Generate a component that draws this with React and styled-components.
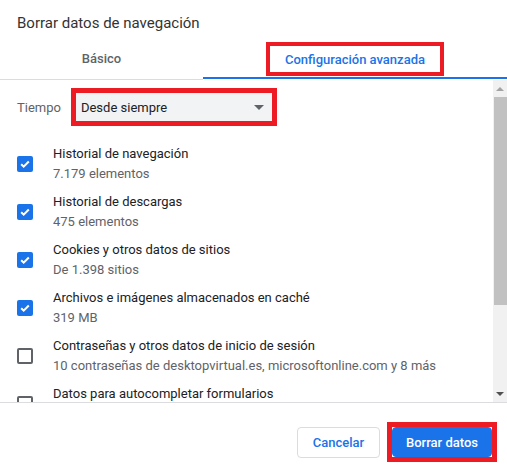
import styled, { createGlobalStyle } from "styled-components";

const GlobalStyle = createGlobalStyle`
  html, body {
    margin: 0;
    padding: 0;
    background: #fff;
  }
  body {
    font-family: Roboto, "Liberation Sans", Arial, sans-serif;
    -webkit-font-smoothing: antialiased;
  }
`;

const RED = "#ed1c24";
const BLUE = "#1a73e8";

const Dialog = styled.div`
  width: 507px;
  height: 471px;
  display: flex;
  flex-direction: column;
  background: #fff;
  overflow: hidden;
`;

const Title = styled.h1`
  margin: 0 0 8px;
  padding: 14px 17px 0;
  font-size: 15px;
  line-height: 18px;
  font-weight: 400;
  color: #333;
`;

const Tabs = styled.div`
  display: flex;
  height: 40px;
`;

const Tab = styled.div`
  box-sizing: border-box;
  display: flex;
  flex-direction: column;
  align-items: center;
  justify-content: ${(p) => (p.$active ? "flex-start" : "center")};
  width: ${(p) => (p.$active ? "auto" : "203px")};
  flex: ${(p) => (p.$active ? 1 : "none")};
  padding: ${(p) => (p.$active ? "2px 0 0" : "0 0 3px")};
  border-bottom: 1px solid ${(p) => (p.$active ? "#fff" : "#dadce0")};
  font-size: 13px;
  font-weight: 500;
  color: ${(p) => (p.$active ? BLUE : "#5f6368")};
`;

const Indicator = styled.div`
  align-self: stretch;
  height: 2px;
  margin-top: 1px;
  background: ${BLUE};
`;

const Highlight = styled.div`
  box-sizing: border-box;
  display: flex;
  align-items: center;
  justify-content: center;
  border: ${(p) => p.$w || 4}px solid ${RED};
  height: ${(p) => (p.$h ? `${p.$h}px` : "auto")};
  padding: ${(p) => p.$pad || "0"};
`;

const Body = styled.div`
  display: flex;
  height: 322px;
  border-bottom: 1px solid #dadce0;
`;

const Content = styled.div`
  flex: 1;
  overflow: hidden;
  padding: 8px 0 0 17px;
`;

const TimeRow = styled.div`
  display: flex;
  align-items: center;
  gap: 10px;
`;

const Label = styled.span`
  font-size: 13px;
  color: #5f6368;
`;

const Select = styled.div`
  box-sizing: border-box;
  width: 196px;
  height: 28px;
  display: flex;
  align-items: center;
  justify-content: space-between;
  padding: 0 8px 0 5px;
  background: #f1f3f4;
  font-size: 13px;
  color: #202124;
`;

const Caret = styled.span`
  width: 0;
  height: 0;
  border-left: 5px solid transparent;
  border-right: 5px solid transparent;
  border-top: 5px solid #5f6368;
`;

const List = styled.div`
  display: flex;
  flex-direction: column;
  gap: 8px;
  margin-top: 18px;
`;

const Row = styled.div`
  display: flex;
  align-items: flex-start;
  gap: 20px;
  height: 40px;
  flex: none;
`;

const Box = styled.span`
  box-sizing: border-box;
  flex: none;
  width: 16px;
  height: 16px;
  margin-top: 12px;
  border-radius: 2px;
  display: flex;
  align-items: center;
  justify-content: center;
  background: ${(p) => (p.$checked ? BLUE : "#fff")};
  border: ${(p) => (p.$checked ? "none" : "2px solid #5f6368")};
`;

const Texts = styled.div`
  display: flex;
  flex-direction: column;
  font-size: 13px;
  line-height: 20px;
`;

const ItemTitle = styled.span`
  color: #202124;
  white-space: nowrap;
`;

const ItemSub = styled.span`
  color: #5f6368;
  white-space: nowrap;
`;

const Scrollbar = styled.div`
  width: 14px;
  flex: none;
  display: flex;
  flex-direction: column;
  background: #f1f1f1;
`;

const Arrow = styled.div`
  height: 17px;
  display: flex;
  align-items: center;
  justify-content: center;
  margin-top: ${(p) => (p.$down ? "auto" : "0")};

  &::before {
    content: "";
    width: 0;
    height: 0;
    border-left: 4px solid transparent;
    border-right: 4px solid transparent;
    ${(p) =>
      p.$down ? "border-top: 4px solid #505050;" : "border-bottom: 4px solid #a3a3a3;"}
  }
`;

const Thumb = styled.div`
  height: 208px;
  margin-left: 1px;
  background: #c1c1c1;
`;

const Footer = styled.div`
  flex: 1;
  display: flex;
  justify-content: flex-end;
  align-items: flex-start;
  gap: 7px;
  padding: 19px 10px 0 0;
`;

const CancelWrap = styled.div`
  height: 40px;
  display: flex;
  align-items: center;
`;

const Button = styled.button`
  box-sizing: border-box;
  height: ${(p) => (p.$primary ? "30px" : "31px")};
  width: ${(p) => (p.$primary ? "100px" : "83px")};
  padding: 0;
  white-space: nowrap;
  border-radius: 4px;
  border: 1px solid ${(p) => (p.$primary ? BLUE : "#dadce0")};
  background: ${(p) => (p.$primary ? BLUE : "#fff")};
  color: ${(p) => (p.$primary ? "#fff" : BLUE)};
  font-family: inherit;
  font-size: 13px;
  font-weight: 500;
`;

const items = [
  { title: "Historial de navegación", sub: "7.179 elementos", checked: true },
  { title: "Historial de descargas", sub: "475 elementos", checked: true },
  { title: "Cookies y otros datos de sitios", sub: "De 1.398 sitios", checked: true },
  { title: "Archivos e imágenes almacenados en caché", sub: "319 MB", checked: true },
  {
    title: "Contraseñas y otros datos de inicio de sesión",
    sub: "10 contraseñas de desktopvirtual.es, microsoftonline.com y 8 más",
    checked: false,
  },
  { title: "Datos para autocompletar formularios", sub: "", checked: false },
];

function Check() {
  return (
    <svg width="12" height="12" viewBox="0 0 12 12">
      <path d="M2.2 6.2l2.5 2.5 5.1-5.2" fill="none" stroke="#fff" strokeWidth="2" />
    </svg>
  );
}

export default function App() {
  return (
    <>
      <GlobalStyle />
      <Dialog>
        <Title>Borrar datos de navegación</Title>
        <Tabs>
          <Tab>Básico</Tab>
          <Tab $active>
            <Highlight $w={4} $h={34} $pad="0 15px">
              Configuración avanzada
            </Highlight>
            <Indicator />
          </Tab>
        </Tabs>
        <Body>
          <Content>
            <TimeRow>
              <Label>Tiempo</Label>
              <Highlight $w={5}>
                <Select>
                  Desde siempre
                  <Caret />
                </Select>
              </Highlight>
            </TimeRow>
            <List>
              {items.map((it) => (
                <Row key={it.title}>
                  <Box $checked={it.checked}>{it.checked && <Check />}</Box>
                  <Texts>
                    <ItemTitle>{it.title}</ItemTitle>
                    {it.sub && <ItemSub>{it.sub}</ItemSub>}
                  </Texts>
                </Row>
              ))}
            </List>
          </Content>
          <Scrollbar>
            <Arrow />
            <Thumb />
            <Arrow $down />
          </Scrollbar>
        </Body>
        <Footer>
          <CancelWrap>
            <Button>Cancelar</Button>
          </CancelWrap>
          <Highlight $w={5}>
            <Button $primary>Borrar datos</Button>
          </Highlight>
        </Footer>
      </Dialog>
    </>
  );
}
